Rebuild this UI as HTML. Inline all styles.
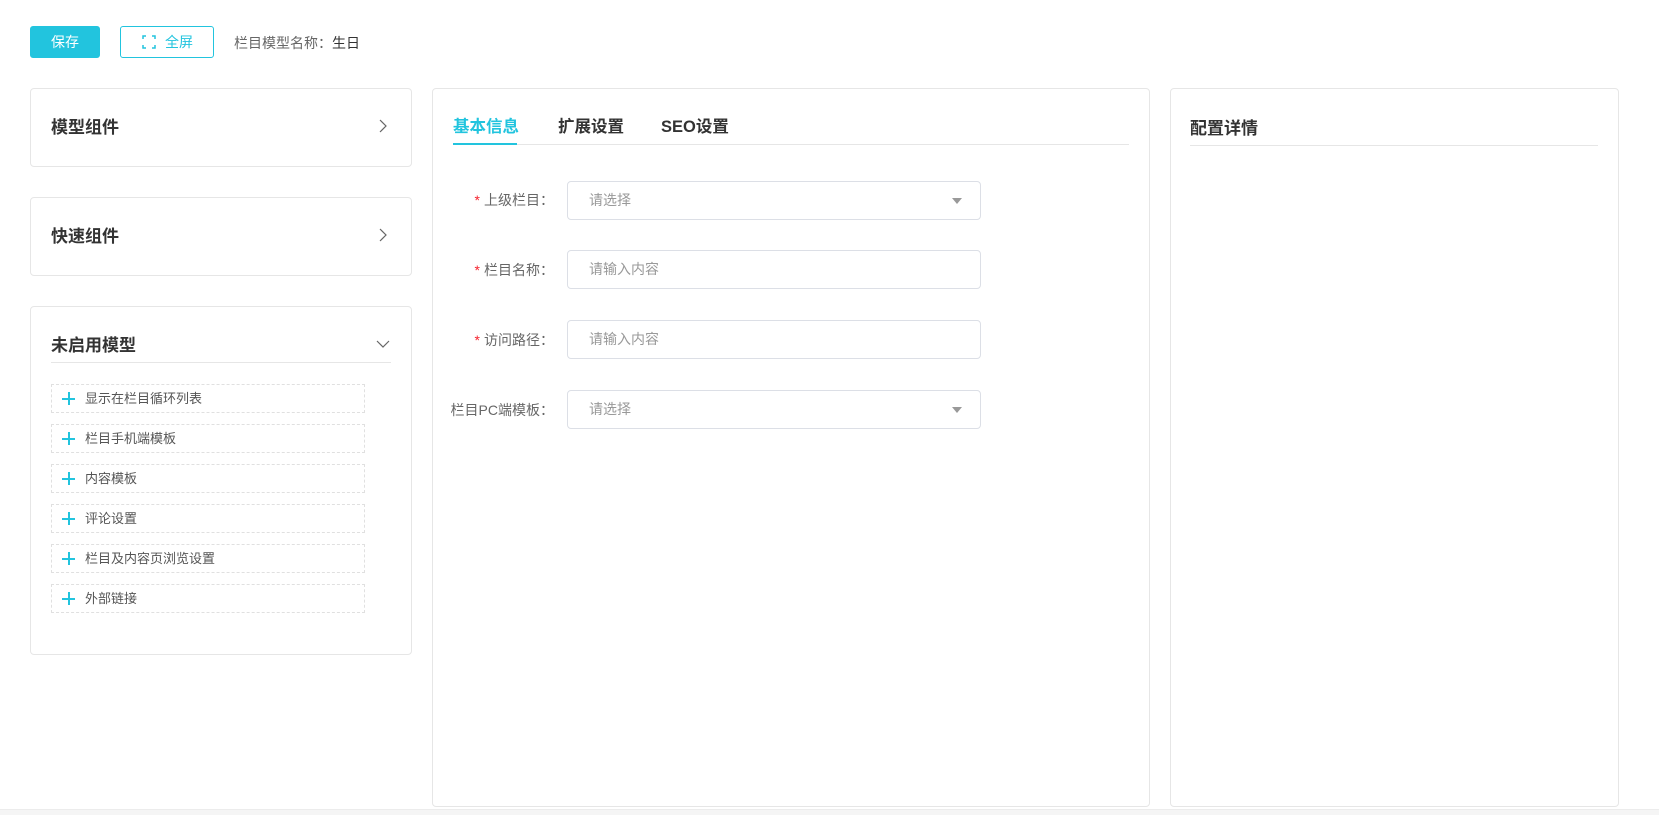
<!DOCTYPE html>
<html><head><meta charset="utf-8"><style>
*{box-sizing:border-box;margin:0;padding:0}
body{width:1659px;height:815px;background:#fff;font-family:"Liberation Sans","Noto Sans CJK SC",sans-serif;position:relative;overflow:hidden;color:#333}
.a{position:absolute}
.card{position:absolute;border:1px solid #e6e6e6;border-radius:4px;background:#fff}
.btn{position:absolute;top:26px;height:32px;border-radius:3px;font-size:14px;line-height:30px;text-align:center}
.h{position:absolute;font-size:17px;font-weight:bold;color:#333}
.lbl{position:absolute;width:128px;left:426px;text-align:right;font-size:14px;color:#666}
.lbl i{color:#f5222d;font-style:normal;margin-right:4px}
.inp{position:absolute;left:567px;width:414px;height:39px;border:1px solid #dcdfe6;border-radius:4px;font-size:14px;color:#999;padding-left:21px;line-height:37px}
.tri{position:absolute;right:18px;top:16px;border-left:5px solid transparent;border-right:5px solid transparent;border-top:6px solid #999}
.item{position:absolute;left:51px;width:314px;height:29px;border:1px dashed #e0e0e0;font-size:13px;color:#555;line-height:27px;padding-left:33px}
.item b{position:absolute;left:10px;top:7px;width:13px;height:13px}
.item b:before{content:"";position:absolute;left:0;top:5.5px;width:13px;height:2px;background:#22c4de}
.item b:after{content:"";position:absolute;left:5.5px;top:0;width:2px;height:13px;background:#22c4de}
</style></head><body>
<div class="btn" style="left:30px;width:70px;background:#22c4de;color:#fff;border:1px solid #22c4de">保存</div>
<div class="btn" style="left:120px;width:94px;border:1px solid #22c4de;color:#22c4de">
<svg width="14" height="14" style="position:absolute;left:21px;top:8px" viewBox="0 0 14 14" fill="none" stroke="#22c4de" stroke-width="1.5"><path d="M1 4V1h3M10 1h3v3M13 10v3h-3M4 13H1v-3"/></svg><span style="margin-left:24px">全屏</span></div>
<div class="a" style="left:234px;top:33px;font-size:14px;color:#666">栏目模型名称：<span style="color:#333">生日</span></div>

<div class="card" style="left:30px;top:88px;width:382px;height:79px"></div>
<div class="h" style="left:51px;top:113px">模型组件</div>
<svg class="a" style="left:378px;top:119px" width="10" height="14" viewBox="0 0 10 14" fill="none" stroke="#666" stroke-width="1.2"><path d="M2 1l6 6-6 6"/></svg>

<div class="card" style="left:30px;top:197px;width:382px;height:79px"></div>
<div class="h" style="left:51px;top:222px">快速组件</div>
<svg class="a" style="left:378px;top:228px" width="10" height="14" viewBox="0 0 10 14" fill="none" stroke="#666" stroke-width="1.2"><path d="M2 1l6 6-6 6"/></svg>

<div class="card" style="left:30px;top:306px;width:382px;height:349px"></div>
<div class="h" style="left:51px;top:331px">未启用模型</div>
<svg class="a" style="left:376px;top:340px" width="14" height="9" viewBox="0 0 14 9" fill="none" stroke="#666" stroke-width="1.2"><path d="M1 1l6 6 6-6"/></svg>
<div class="a" style="left:51px;top:362px;width:340px;height:1px;background:#e6e6e6"></div>
<div class="item" style="top:384px"><b></b>显示在栏目循环列表</div>
<div class="item" style="top:424px"><b></b>栏目手机端模板</div>
<div class="item" style="top:464px"><b></b>内容模板</div>
<div class="item" style="top:504px"><b></b>评论设置</div>
<div class="item" style="top:544px"><b></b>栏目及内容页浏览设置</div>
<div class="item" style="top:584px"><b></b>外部链接</div>

<div class="card" style="left:432px;top:88px;width:718px;height:719px"></div>
<div class="a" style="left:453px;top:144px;width:676px;height:1px;background:#e6e6e6"></div>
<div class="h" style="left:453px;top:113px;color:#22c4de;font-size:16.5px">基本信息</div>
<div class="a" style="left:453px;top:143px;width:64px;height:2px;background:#22c4de"></div>
<div class="h" style="left:558px;top:113px;font-size:16.5px">扩展设置</div>
<div class="h" style="left:661px;top:113px;font-size:16.5px">SEO设置</div>

<div class="lbl" style="top:190px"><i>*</i>上级栏目：</div>
<div class="inp" style="top:181px">请选择<span class="tri"></span></div>
<div class="lbl" style="top:260px"><i>*</i>栏目名称：</div>
<div class="inp" style="top:250px">请输入内容</div>
<div class="lbl" style="top:330px"><i>*</i>访问路径：</div>
<div class="inp" style="top:320px">请输入内容</div>
<div class="lbl" style="top:400px">栏目PC端模板：</div>
<div class="inp" style="top:390px">请选择<span class="tri"></span></div>

<div class="card" style="left:1170px;top:88px;width:449px;height:719px"></div>
<div class="h" style="left:1190px;top:114px;font-size:17px">配置详情</div>
<div class="a" style="left:1190px;top:145px;width:408px;height:1px;background:#e6e6e6"></div>

<div class="a" style="left:0;top:809px;width:1659px;height:6px;background:#f5f5f5;border-top:1px solid #ececec"></div>
</body></html>
